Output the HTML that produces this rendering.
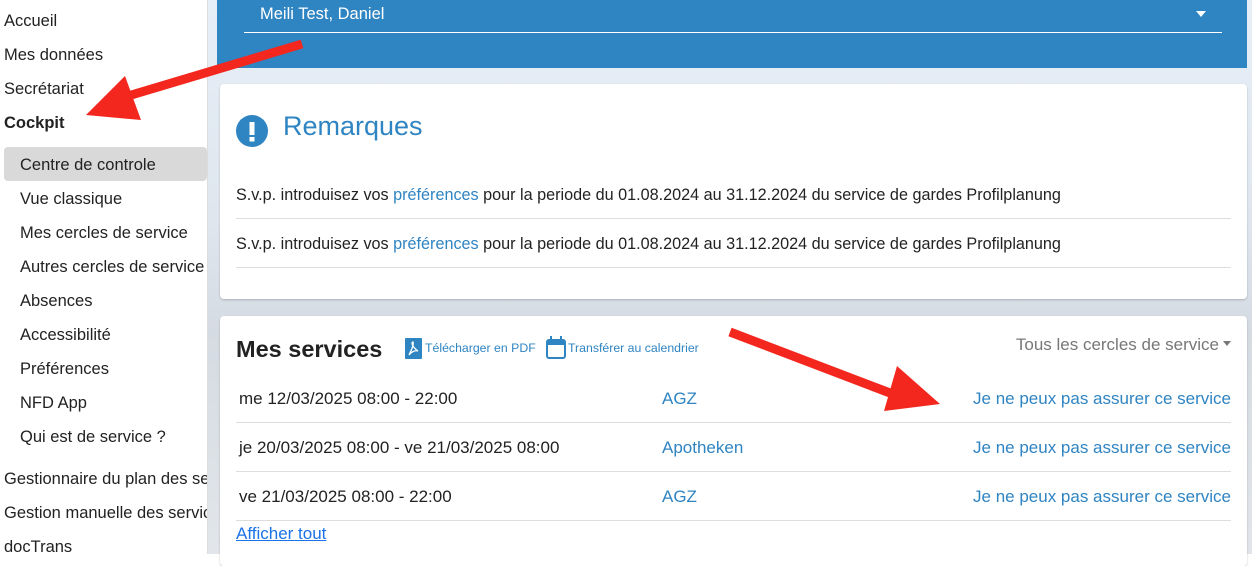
<!DOCTYPE html>
<html><head><meta charset="utf-8"><style>
body{margin:0;width:1252px;height:554px;overflow:hidden;font-family:"Liberation Sans",sans-serif;background:#fff;position:relative}
.side{position:absolute;left:0;top:0;width:207px;height:554px;background:#fff;border-right:1px solid #ddd;overflow:hidden;white-space:nowrap}
.side div{position:absolute;font-size:16.5px;color:#222}
.bg{position:absolute;left:208px;top:0;width:1044px;height:554px;background:linear-gradient(180deg,#e6eef7 0,#dfe6ee 40%,#d5dbe2 60%,#e2e6ea 100%)}
.head{position:absolute;left:217px;top:0;width:1030px;height:68px;background:#2f84c2}
.head .sel{position:absolute;left:27px;top:0;width:978px;height:33px;border-bottom:1px solid #fff;color:#fff;font-size:16.5px;line-height:26px;padding-left:16px;box-sizing:border-box}
.card{position:absolute;background:#fff;border-radius:4px;box-shadow:0 1px 2px rgba(0,0,0,.2);overflow:hidden}
.t{position:absolute;font-size:16.2px;color:#222;white-space:nowrap}
.r{font-size:17px}
.b{color:#2f84c2}
.hr{position:absolute;height:1px;background:#ddd}
</style></head><body>
<div class="side">
<div style="left:4px;top:12px">Accueil</div>
<div style="left:4px;top:46px">Mes données</div>
<div style="left:4px;top:80px">Secrétariat</div>
<div style="left:4px;top:114px;font-weight:bold">Cockpit</div>
<div style="left:4px;top:147px;width:203px;height:34px;background:#d9d9d9;border-radius:4px"></div>
<div style="left:20px;top:156px">Centre de controle</div>
<div style="left:20px;top:190px">Vue classique</div>
<div style="left:20px;top:224px">Mes cercles de service</div>
<div style="left:20px;top:258px">Autres cercles de service</div>
<div style="left:20px;top:292px">Absences</div>
<div style="left:20px;top:326px">Accessibilité</div>
<div style="left:20px;top:360px">Préférences</div>
<div style="left:20px;top:394px">NFD App</div>
<div style="left:20px;top:428px">Qui est de service ?</div>
<div style="left:4px;top:470px">Gestionnaire du plan des services</div>
<div style="left:4px;top:504px">Gestion manuelle des services</div>
<div style="left:4px;top:538px">docTrans</div>
</div>
<div class="bg"></div>
<div class="head"><div class="sel" style="padding-top:1px">Meili Test, Daniel<span style="position:absolute;right:16px;top:11px;border:5px solid transparent;border-top:6px solid #fff"></span></div></div>
<div class="card" style="left:220px;top:84px;width:1027px;height:215px">
<svg style="position:absolute;left:16px;top:31px" width="32" height="32"><circle cx="16" cy="16" r="16" fill="#2f84c2"/><rect x="13.5" y="7" width="5" height="13" fill="#fff"/><rect x="13.5" y="22" width="5" height="4.5" fill="#fff"/></svg>
<div class="t b" style="left:63px;top:27px;font-size:27px">Remarques</div>
<div class="t" style="left:16px;top:102px">S.v.p. introduisez vos <span class="b">préférences</span> pour la periode du 01.08.2024 au 31.12.2024 du service de gardes Profilplanung</div>
<div class="hr" style="left:16px;top:134px;width:995px"></div>
<div class="t" style="left:16px;top:151px">S.v.p. introduisez vos <span class="b">préférences</span> pour la periode du 01.08.2024 au 31.12.2024 du service de gardes Profilplanung</div>
<div class="hr" style="left:16px;top:183px;width:995px"></div>
</div>
<div class="card" style="left:220px;top:316px;width:1027px;height:250px">
<div class="t" style="left:16px;top:20px;font-size:23.5px;font-weight:bold">Mes services</div>
<svg style="position:absolute;left:185px;top:22px" width="17" height="21"><rect width="17" height="21" rx="1" fill="#2f84c2"/><path d="M4 17 C7 11 9 6 8 4 C6 4 7 9 13 13 C10 12 6 14 4 17Z" fill="none" stroke="#fff" stroke-width="1.3"/></svg>
<div class="t b" style="left:205px;top:25px;font-size:12.3px">Télécharger en PDF</div>
<svg style="position:absolute;left:326px;top:20px" width="20" height="23"><rect x="1" y="4" width="18" height="18" rx="2" fill="none" stroke="#2f84c2" stroke-width="2"/><rect x="1" y="4" width="18" height="5" fill="#2f84c2"/><rect x="4" y="0" width="2" height="5" fill="#2f84c2"/><rect x="14" y="0" width="2" height="5" fill="#2f84c2"/></svg>
<div class="t b" style="left:348px;top:25px;font-size:12.3px">Transférer au calendrier</div>
<div class="t r" style="right:16px;top:19px;color:#777">Tous les cercles de service<span style="display:inline-block;margin-left:4px;border:4px solid transparent;border-top:5px solid #777;vertical-align:middle"></span></div>
<div class="t r" style="left:19px;top:73px">me 12/03/2025 08:00 - 22:00</div>
<div class="t r b" style="left:442px;top:73px">AGZ</div>
<div class="t r b" style="right:16px;top:73px">Je ne peux pas assurer ce service</div>
<div class="hr" style="left:16px;top:106px;width:995px"></div>
<div class="t r" style="left:19px;top:122px">je 20/03/2025 08:00 - ve 21/03/2025 08:00</div>
<div class="t r b" style="left:442px;top:122px">Apotheken</div>
<div class="t r b" style="right:16px;top:122px">Je ne peux pas assurer ce service</div>
<div class="hr" style="left:16px;top:155px;width:995px"></div>
<div class="t r" style="left:19px;top:171px">ve 21/03/2025 08:00 - 22:00</div>
<div class="t r b" style="left:442px;top:171px">AGZ</div>
<div class="t r b" style="right:16px;top:171px">Je ne peux pas assurer ce service</div>
<div class="hr" style="left:16px;top:204px;width:995px"></div>
<div class="t r" style="left:16px;top:208px;color:#1a73e8;text-decoration:underline">Afficher tout</div>
</div>
<svg style="position:absolute;left:0;top:0" width="1252" height="554">
<path d="M302 44 L128 96" stroke="#f4271f" stroke-width="9"/>
<polygon points="86,115 125,76 141,120" fill="#f4271f"/>
<path d="M730 332 L890 393" stroke="#f4271f" stroke-width="9"/>
<polygon points="940,404 897,366 884,411" fill="#f4271f"/>
</svg>
</body></html>
